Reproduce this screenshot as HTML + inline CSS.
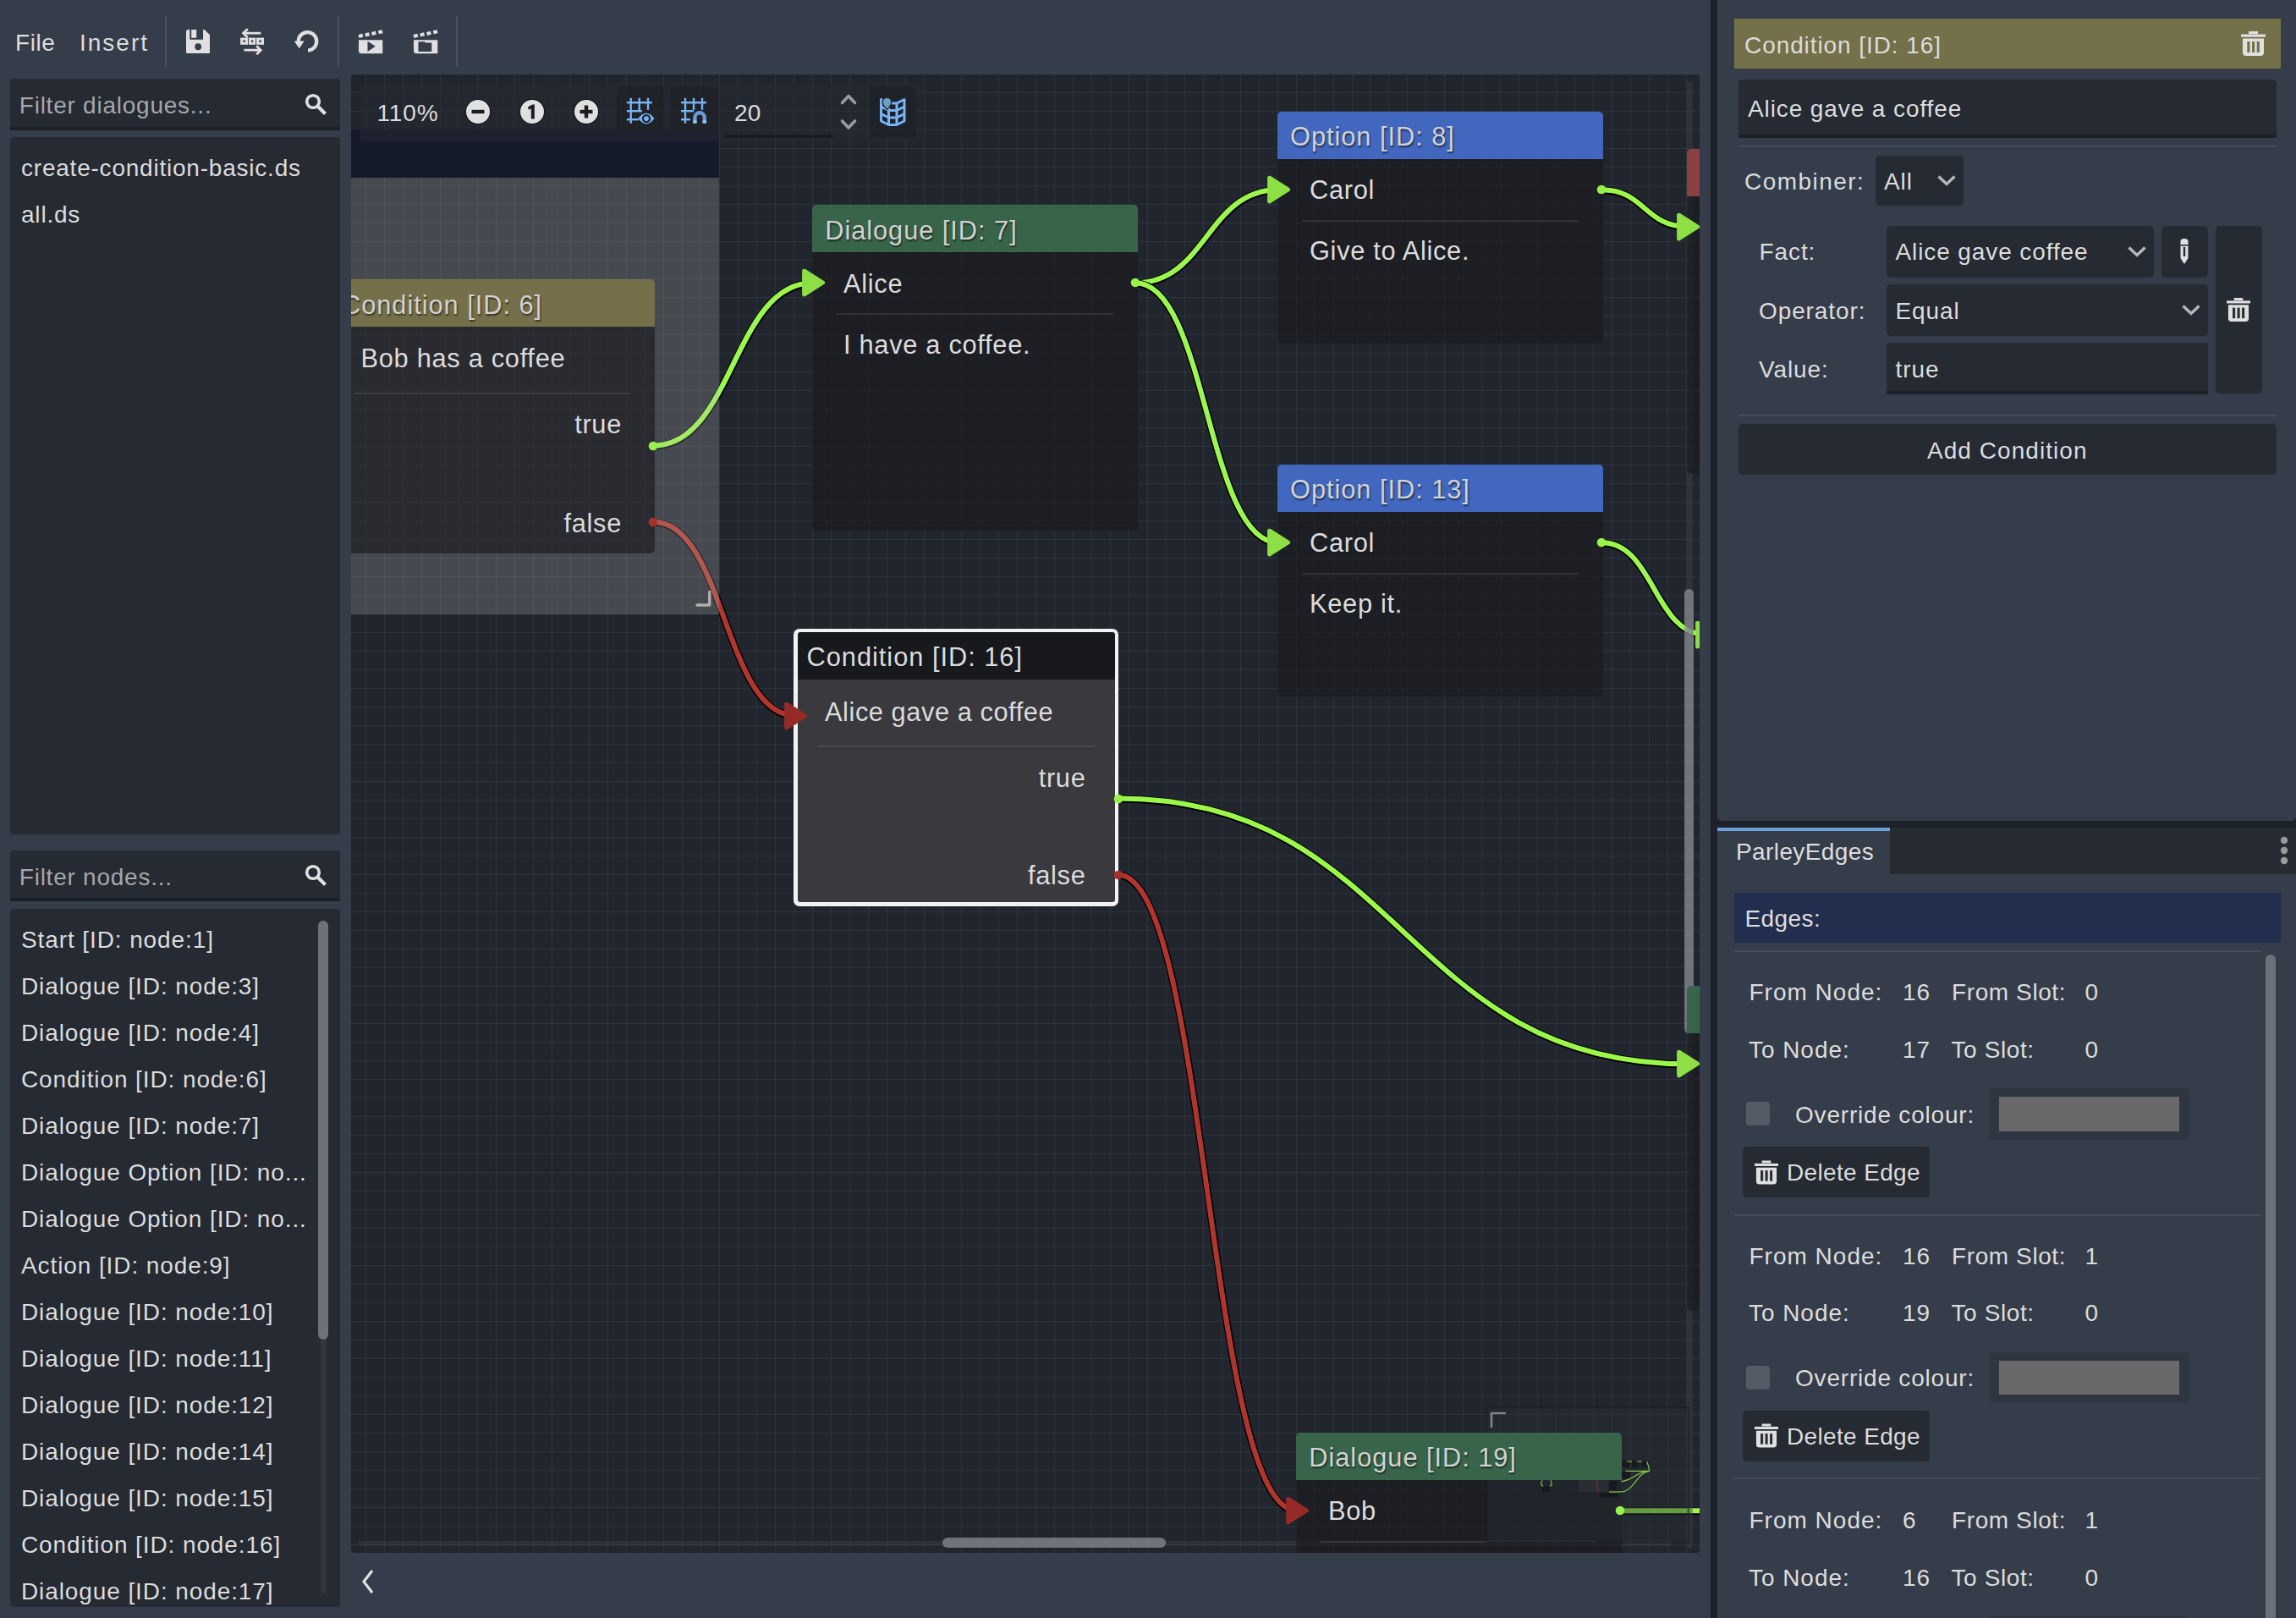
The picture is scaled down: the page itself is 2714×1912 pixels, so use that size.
<!DOCTYPE html><html><head><meta charset="utf-8"><style>
html,body{margin:0;padding:0;width:2714px;height:1912px;overflow:hidden;background:#363d4a;}
body{position:relative;font-family:"Liberation Sans",sans-serif;}
.t{position:absolute;line-height:1;white-space:pre;}
.r{position:absolute;}
</style></head><body>
<div class="t" style="left:18.0px;top:36.9px;font-size:28px;color:#dcdcdc;letter-spacing:0.55px;">File</div>
<div class="t" style="left:94.0px;top:36.9px;font-size:28px;color:#dcdcdc;letter-spacing:2.0px;">Insert</div>
<div class="r" style="left:195.0px;top:19.0px;width:2.0px;height:60.0px;background:#4a5161;"></div>
<div class="r" style="left:399.0px;top:19.0px;width:2.0px;height:60.0px;background:#4a5161;"></div>
<div class="r" style="left:539.0px;top:19.0px;width:2.0px;height:60.0px;background:#4a5161;"></div>
<svg class="r" style="left:219.8px;top:34.8px;" width="28.4" height="28.4" viewBox="0 0 16 16"><path fill="#e0e0e0" d="M1.5 0H12.2L16 3.8V14.5A1.5 1.5 0 0 1 14.5 16H1.5A1.5 1.5 0 0 1 0 14.5V1.5A1.5 1.5 0 0 1 1.5 0ZM2.4 0V6.6H11.3V0ZM3.5 0H6.9V5.5H3.5Z" fill-rule="evenodd"/><circle cx="8" cy="11.4" r="2.2" fill="#363d4a"/></svg>
<svg class="r" style="left:0;top:0" width="600" height="88">
<g fill="none" stroke="#e0e0e0" stroke-width="2.8">
<path d="M287.5 39.2H308.3"/><path d="M291.8 35.2L287.6 39.2L291.8 43.2" stroke-linecap="square"/>
<path d="M288.5 59.2H308"/><path d="M304.2 55.2L308.2 59.2L304.2 63.2" stroke-linecap="square"/>
<path d="M363.5 48.9m-10.75 0A10.75 10.75 0 1 1 364.05 59.6" stroke-width="4.3"/>
</g>
<g fill="#e0e0e0"><rect x="284.1" y="44.6" width="9" height="8.2"/><rect x="294" y="44.6" width="8.2" height="8.2"/><rect x="303.1" y="44.6" width="8.9" height="8.2"/>
<path d="M347.8 48.6H359.6L353.7 57.2Z"/></g>
<g fill="#363d4a"><rect x="287.4" y="47.5" width="2.4" height="2.4"/><rect x="296.9" y="47.5" width="2.4" height="2.4"/><rect x="306.3" y="47.5" width="2.4" height="2.4"/></g>
</svg>
<svg class="r" style="left:422.5px;top:36.0px;overflow:visible;" width="30" height="28" viewBox="0 0 30 28"><g fill="#e0e0e0">
<path d="M0.50 5.00L5.30 3.80L6.30 7.80L1.50 9.00Z"/><path d="M8.25 3.45L13.05 2.25L14.05 6.25L9.25 7.45Z"/><path d="M16.00 1.90L20.80 0.70L21.80 4.70L17.00 5.90Z"/><path d="M23.75 0.35L28.55 -0.85L29.55 3.15L24.75 4.35Z"/><path d="M1 11.2H29.3V27.2H4.5A3.5 3.5 0 0 1 1 23.7Z"/></g><path d="M11.5 12.8L20.8 18.8L11.5 24.9Z" fill="#363d4a"/></svg>
<svg class="r" style="left:487.5px;top:36.0px;overflow:visible;" width="30" height="28" viewBox="0 0 30 28"><g fill="#e0e0e0">
<path d="M0.50 5.00L5.30 3.80L6.30 7.80L1.50 9.00Z"/><path d="M8.25 3.45L13.05 2.25L14.05 6.25L9.25 7.45Z"/><path d="M16.00 1.90L20.80 0.70L21.80 4.70L17.00 5.90Z"/><path d="M23.75 0.35L28.55 -0.85L29.55 3.15L24.75 4.35Z"/><path d="M1 11.2H29.3V27.2H4.5A3.5 3.5 0 0 1 1 23.7Z"/></g><path d="M6.5 13.2H14.3V14.5H22.3V25H6.5Z" fill="#363d4a"/></svg>
<div class="r" style="left:12.0px;top:93.0px;width:390.0px;height:61.0px;background:#252a33;border-radius:4px 4px 0 0;"></div>
<div class="r" style="left:12.0px;top:150.0px;width:390.0px;height:4.0px;background:#1d2027;"></div>
<div class="t" style="left:22.8px;top:110.9px;font-size:28px;color:#a5a7ab;letter-spacing:0.76px;">Filter dialogues...</div>
<svg class="r" style="left:358.5px;top:108.5px;" width="30" height="30" viewBox="0 0 30 30"><circle cx="11" cy="11" r="7.3" fill="none" stroke="#e0e0e0" stroke-width="3.6"/><path d="M16 16L25.5 25.5" stroke="#e0e0e0" stroke-width="4.2" stroke-linecap="butt"/></svg>
<div class="r" style="left:12.0px;top:162.0px;width:390.0px;height:824.0px;background:#252a33;border-radius:4px;"></div>
<div class="t" style="left:25.0px;top:184.9px;font-size:28px;color:#dcdcdc;letter-spacing:0.78px;">create-condition-basic.ds</div>
<div class="t" style="left:25.0px;top:239.9px;font-size:28px;color:#dcdcdc;letter-spacing:0.8px;">all.ds</div>
<div class="r" style="left:12.0px;top:1005.0px;width:390.0px;height:60.0px;background:#252a33;border-radius:4px 4px 0 0;"></div>
<div class="r" style="left:12.0px;top:1061.0px;width:390.0px;height:4.0px;background:#1d2027;"></div>
<div class="t" style="left:22.8px;top:1022.6px;font-size:28px;color:#a5a7ab;letter-spacing:0.76px;">Filter nodes...</div>
<svg class="r" style="left:359.0px;top:1020.0px;" width="30" height="30" viewBox="0 0 30 30"><circle cx="11" cy="11" r="7.3" fill="none" stroke="#e0e0e0" stroke-width="3.6"/><path d="M16 16L25.5 25.5" stroke="#e0e0e0" stroke-width="4.2" stroke-linecap="butt"/></svg>
<div class="r" style="left:12.0px;top:1074.0px;width:390.0px;height:825.0px;background:#252a33;border-radius:4px;"></div>
<div class="t" style="left:25.0px;top:1096.6px;font-size:28px;color:#dcdcdc;letter-spacing:0.9px;">Start [ID: node:1]</div>
<div class="t" style="left:25.0px;top:1151.6px;font-size:28px;color:#dcdcdc;letter-spacing:0.9px;">Dialogue [ID: node:3]</div>
<div class="t" style="left:25.0px;top:1206.6px;font-size:28px;color:#dcdcdc;letter-spacing:0.9px;">Dialogue [ID: node:4]</div>
<div class="t" style="left:25.0px;top:1261.6px;font-size:28px;color:#dcdcdc;letter-spacing:0.9px;">Condition [ID: node:6]</div>
<div class="t" style="left:25.0px;top:1316.6px;font-size:28px;color:#dcdcdc;letter-spacing:0.9px;">Dialogue [ID: node:7]</div>
<div class="t" style="left:25.0px;top:1371.6px;font-size:28px;color:#dcdcdc;letter-spacing:0.9px;">Dialogue Option [ID: no...</div>
<div class="t" style="left:25.0px;top:1426.7px;font-size:28px;color:#dcdcdc;letter-spacing:0.9px;">Dialogue Option [ID: no...</div>
<div class="t" style="left:25.0px;top:1481.7px;font-size:28px;color:#dcdcdc;letter-spacing:0.9px;">Action [ID: node:9]</div>
<div class="t" style="left:25.0px;top:1536.7px;font-size:28px;color:#dcdcdc;letter-spacing:0.9px;">Dialogue [ID: node:10]</div>
<div class="t" style="left:25.0px;top:1591.7px;font-size:28px;color:#dcdcdc;letter-spacing:0.9px;">Dialogue [ID: node:11]</div>
<div class="t" style="left:25.0px;top:1646.7px;font-size:28px;color:#dcdcdc;letter-spacing:0.9px;">Dialogue [ID: node:12]</div>
<div class="t" style="left:25.0px;top:1701.7px;font-size:28px;color:#dcdcdc;letter-spacing:0.9px;">Dialogue [ID: node:14]</div>
<div class="t" style="left:25.0px;top:1756.7px;font-size:28px;color:#dcdcdc;letter-spacing:0.9px;">Dialogue [ID: node:15]</div>
<div class="t" style="left:25.0px;top:1811.7px;font-size:28px;color:#dcdcdc;letter-spacing:0.9px;">Condition [ID: node:16]</div>
<div class="t" style="left:25.0px;top:1866.7px;font-size:28px;color:#dcdcdc;letter-spacing:0.9px;">Dialogue [ID: node:17]</div>
<div class="r" style="left:378.6px;top:1088.0px;width:7.2px;height:795.0px;background:#30353f;border-radius:4px;"></div>
<div class="r" style="left:376.0px;top:1088.0px;width:11.7px;height:495.0px;background:#6d7178;border-radius:6px;"></div>
<div class="r" style="left:415px;top:88px;width:1594px;height:1747px;overflow:hidden;border-radius:4px;background:#21252d;">
<svg class="r" style="left:0;top:0" width="1594" height="1747"><g fill="rgba(255,255,255,0.062)"><rect x="17" y="0" width="1" height="1747"/><rect x="39" y="0" width="1" height="1747"/><rect x="61" y="0" width="1" height="1747"/><rect x="83" y="0" width="1" height="1747"/><rect x="105" y="0" width="1" height="1747"/><rect x="127" y="0" width="1" height="1747"/><rect x="149" y="0" width="1" height="1747"/><rect x="171" y="0" width="1" height="1747"/><rect x="193" y="0" width="1" height="1747"/><rect x="215" y="0" width="1" height="1747"/><rect x="237" y="0" width="1" height="1747"/><rect x="259" y="0" width="1" height="1747"/><rect x="281" y="0" width="1" height="1747"/><rect x="303" y="0" width="1" height="1747"/><rect x="325" y="0" width="1" height="1747"/><rect x="347" y="0" width="1" height="1747"/><rect x="369" y="0" width="1" height="1747"/><rect x="391" y="0" width="1" height="1747"/><rect x="413" y="0" width="1" height="1747"/><rect x="435" y="0" width="1" height="1747"/><rect x="457" y="0" width="1" height="1747"/><rect x="479" y="0" width="1" height="1747"/><rect x="501" y="0" width="1" height="1747"/><rect x="523" y="0" width="1" height="1747"/><rect x="545" y="0" width="1" height="1747"/><rect x="567" y="0" width="1" height="1747"/><rect x="589" y="0" width="1" height="1747"/><rect x="611" y="0" width="1" height="1747"/><rect x="633" y="0" width="1" height="1747"/><rect x="655" y="0" width="1" height="1747"/><rect x="677" y="0" width="1" height="1747"/><rect x="699" y="0" width="1" height="1747"/><rect x="721" y="0" width="1" height="1747"/><rect x="743" y="0" width="1" height="1747"/><rect x="765" y="0" width="1" height="1747"/><rect x="787" y="0" width="1" height="1747"/><rect x="809" y="0" width="1" height="1747"/><rect x="831" y="0" width="1" height="1747"/><rect x="853" y="0" width="1" height="1747"/><rect x="875" y="0" width="1" height="1747"/><rect x="897" y="0" width="1" height="1747"/><rect x="919" y="0" width="1" height="1747"/><rect x="941" y="0" width="1" height="1747"/><rect x="963" y="0" width="1" height="1747"/><rect x="985" y="0" width="1" height="1747"/><rect x="1007" y="0" width="1" height="1747"/><rect x="1029" y="0" width="1" height="1747"/><rect x="1051" y="0" width="1" height="1747"/><rect x="1073" y="0" width="1" height="1747"/><rect x="1095" y="0" width="1" height="1747"/><rect x="1117" y="0" width="1" height="1747"/><rect x="1139" y="0" width="1" height="1747"/><rect x="1161" y="0" width="1" height="1747"/><rect x="1183" y="0" width="1" height="1747"/><rect x="1204" y="0" width="1" height="1747"/><rect x="1226" y="0" width="1" height="1747"/><rect x="1248" y="0" width="1" height="1747"/><rect x="1270" y="0" width="1" height="1747"/><rect x="1292" y="0" width="1" height="1747"/><rect x="1314" y="0" width="1" height="1747"/><rect x="1336" y="0" width="1" height="1747"/><rect x="1358" y="0" width="1" height="1747"/><rect x="1380" y="0" width="1" height="1747"/><rect x="1402" y="0" width="1" height="1747"/><rect x="1424" y="0" width="1" height="1747"/><rect x="1446" y="0" width="1" height="1747"/><rect x="1468" y="0" width="1" height="1747"/><rect x="1490" y="0" width="1" height="1747"/><rect x="1512" y="0" width="1" height="1747"/><rect x="1534" y="0" width="1" height="1747"/><rect x="1556" y="0" width="1" height="1747"/><rect x="1578" y="0" width="1" height="1747"/><rect x="0" y="21" width="1594" height="1"/><rect x="0" y="43" width="1594" height="1"/><rect x="0" y="65" width="1594" height="1"/><rect x="0" y="87" width="1594" height="1"/><rect x="0" y="109" width="1594" height="1"/><rect x="0" y="131" width="1594" height="1"/><rect x="0" y="153" width="1594" height="1"/><rect x="0" y="175" width="1594" height="1"/><rect x="0" y="197" width="1594" height="1"/><rect x="0" y="219" width="1594" height="1"/><rect x="0" y="241" width="1594" height="1"/><rect x="0" y="263" width="1594" height="1"/><rect x="0" y="285" width="1594" height="1"/><rect x="0" y="307" width="1594" height="1"/><rect x="0" y="329" width="1594" height="1"/><rect x="0" y="351" width="1594" height="1"/><rect x="0" y="373" width="1594" height="1"/><rect x="0" y="395" width="1594" height="1"/><rect x="0" y="417" width="1594" height="1"/><rect x="0" y="439" width="1594" height="1"/><rect x="0" y="461" width="1594" height="1"/><rect x="0" y="483" width="1594" height="1"/><rect x="0" y="505" width="1594" height="1"/><rect x="0" y="527" width="1594" height="1"/><rect x="0" y="549" width="1594" height="1"/><rect x="0" y="571" width="1594" height="1"/><rect x="0" y="593" width="1594" height="1"/><rect x="0" y="615" width="1594" height="1"/><rect x="0" y="637" width="1594" height="1"/><rect x="0" y="659" width="1594" height="1"/><rect x="0" y="681" width="1594" height="1"/><rect x="0" y="703" width="1594" height="1"/><rect x="0" y="725" width="1594" height="1"/><rect x="0" y="747" width="1594" height="1"/><rect x="0" y="769" width="1594" height="1"/><rect x="0" y="791" width="1594" height="1"/><rect x="0" y="813" width="1594" height="1"/><rect x="0" y="835" width="1594" height="1"/><rect x="0" y="857" width="1594" height="1"/><rect x="0" y="879" width="1594" height="1"/><rect x="0" y="901" width="1594" height="1"/><rect x="0" y="923" width="1594" height="1"/><rect x="0" y="945" width="1594" height="1"/><rect x="0" y="967" width="1594" height="1"/><rect x="0" y="989" width="1594" height="1"/><rect x="0" y="1011" width="1594" height="1"/><rect x="0" y="1033" width="1594" height="1"/><rect x="0" y="1055" width="1594" height="1"/><rect x="0" y="1077" width="1594" height="1"/><rect x="0" y="1099" width="1594" height="1"/><rect x="0" y="1121" width="1594" height="1"/><rect x="0" y="1143" width="1594" height="1"/><rect x="0" y="1165" width="1594" height="1"/><rect x="0" y="1187" width="1594" height="1"/><rect x="0" y="1209" width="1594" height="1"/><rect x="0" y="1231" width="1594" height="1"/><rect x="0" y="1253" width="1594" height="1"/><rect x="0" y="1275" width="1594" height="1"/><rect x="0" y="1297" width="1594" height="1"/><rect x="0" y="1319" width="1594" height="1"/><rect x="0" y="1341" width="1594" height="1"/><rect x="0" y="1363" width="1594" height="1"/><rect x="0" y="1385" width="1594" height="1"/><rect x="0" y="1407" width="1594" height="1"/><rect x="0" y="1429" width="1594" height="1"/><rect x="0" y="1451" width="1594" height="1"/><rect x="0" y="1473" width="1594" height="1"/><rect x="0" y="1495" width="1594" height="1"/><rect x="0" y="1517" width="1594" height="1"/><rect x="0" y="1539" width="1594" height="1"/><rect x="0" y="1561" width="1594" height="1"/><rect x="0" y="1583" width="1594" height="1"/><rect x="0" y="1605" width="1594" height="1"/><rect x="0" y="1627" width="1594" height="1"/><rect x="0" y="1649" width="1594" height="1"/><rect x="0" y="1671" width="1594" height="1"/><rect x="0" y="1693" width="1594" height="1"/><rect x="0" y="1715" width="1594" height="1"/><rect x="0" y="1737" width="1594" height="1"/></g></svg>
<svg class="r" style="left:0;top:0;" width="1594" height="1747"><path d="M357.4 438.5C451.7 438.5 451.7 246.2 546.0 246.2" fill="none" stroke="#000" stroke-opacity="1.0" stroke-width="8.8" transform="translate(0.3,0.6)"/><path d="M357.4 438.5C451.7 438.5 451.7 246.2 546.0 246.2" fill="none" stroke="#9cf74b" stroke-opacity="1.0" stroke-width="6"/><path d="M357.4 528.7C441.2 528.7 441.2 757.7 525.0 757.7" fill="none" stroke="#000" stroke-opacity="1.0" stroke-width="8.8" transform="translate(0.3,0.6)"/><path d="M357.4 528.7C441.2 528.7 441.2 757.7 525.0 757.7" fill="none" stroke="#b0352e" stroke-opacity="1.0" stroke-width="6"/><path d="M927.0 246.2C1011.5 246.2 1011.5 136.3 1096.0 136.3" fill="none" stroke="#000" stroke-opacity="1.0" stroke-width="8.8" transform="translate(0.3,0.6)"/><path d="M927.0 246.2C1011.5 246.2 1011.5 136.3 1096.0 136.3" fill="none" stroke="#9cf74b" stroke-opacity="1.0" stroke-width="6"/><path d="M927.0 246.2C1011.5 246.2 1011.5 553.3 1096.0 553.3" fill="none" stroke="#000" stroke-opacity="1.0" stroke-width="8.8" transform="translate(0.3,0.6)"/><path d="M927.0 246.2C1011.5 246.2 1011.5 553.3 1096.0 553.3" fill="none" stroke="#9cf74b" stroke-opacity="1.0" stroke-width="6"/><path d="M1478.4 136.3C1529.2 136.3 1529.2 180.0 1580.0 180.0" fill="none" stroke="#000" stroke-opacity="1.0" stroke-width="8.8" transform="translate(0.3,0.6)"/><path d="M1478.4 136.3C1529.2 136.3 1529.2 180.0 1580.0 180.0" fill="none" stroke="#9cf74b" stroke-opacity="1.0" stroke-width="6"/><path d="M1478.4 553.3C1540.2 553.3 1540.2 662.0 1602.0 662.0" fill="none" stroke="#000" stroke-opacity="1.0" stroke-width="8.8" transform="translate(0.3,0.6)"/><path d="M1478.4 553.3C1540.2 553.3 1540.2 662.0 1602.0 662.0" fill="none" stroke="#9cf74b" stroke-opacity="1.0" stroke-width="6"/><path d="M906.6 855.6C1243.3 855.6 1243.3 1169.3 1580.0 1169.3" fill="none" stroke="#000" stroke-opacity="1.0" stroke-width="8.8" transform="translate(0.3,0.6)"/><path d="M906.6 855.6C1243.3 855.6 1243.3 1169.3 1580.0 1169.3" fill="none" stroke="#9cf74b" stroke-opacity="1.0" stroke-width="6"/><path d="M906.6 945.8C1012.3 945.8 1012.3 1697.2 1118.0 1697.2" fill="none" stroke="#000" stroke-opacity="1.0" stroke-width="8.8" transform="translate(0.3,0.6)"/><path d="M906.6 945.8C1012.3 945.8 1012.3 1697.2 1118.0 1697.2" fill="none" stroke="#b0352e" stroke-opacity="1.0" stroke-width="6"/><path d="M1500.4 1697.2C1592.7 1697.2 1592.7 1697.2 1685.0 1697.2" fill="none" stroke="#000" stroke-opacity="1.0" stroke-width="8.8" transform="translate(0.3,0.6)"/><path d="M1500.4 1697.2C1592.7 1697.2 1592.7 1697.2 1685.0 1697.2" fill="none" stroke="#9cf74b" stroke-opacity="1.0" stroke-width="6"/></svg>
<div class="r" style="left:1578.5px;top:7.8px;width:7.0px;height:1734.2px;background:rgba(60,64,72,0.45);border-radius:3px;"></div>
<div class="r" style="left:1576.0px;top:608.2px;width:11.3px;height:524.8px;background:rgba(140,143,150,0.72);border-radius:6px;"></div>
<div class="r" style="left:8.0px;top:1732.5px;width:1553.0px;height:6.0px;background:rgba(60,64,72,0.45);border-radius:3px;"></div>
<div class="r" style="left:699.0px;top:1729.0px;width:263.6px;height:11.8px;background:rgba(140,143,150,0.72);border-radius:6px;"></div>
<div class="r" style="left:-115.0px;top:65.3px;width:550.4px;height:56.7px;background:#161b2b;"></div>
<div class="r" style="left:-115.0px;top:122.0px;width:550.4px;height:515.5px;background:rgba(185,186,188,0.25);"></div>
<svg class="r" style="left:405px;top:608px" width="24" height="24"><path d="M18.7 3.5V19H4" fill="none" stroke="#b0b0ab" stroke-width="3.4" stroke-linecap="round" stroke-linejoin="round"/></svg>
<div class="r" style="left:-26.0px;top:242.0px;width:385.0px;height:56.2px;background:#757049;border-radius:5px 5px 0 0;"></div>
<div class="r" style="left:-26.0px;top:298.2px;width:385.0px;height:267.6px;background:rgba(26,26,29,0.64);border-radius:0 0 5px 5px;"></div>
<div class="t" style="left:-11.0px;top:257.7px;font-size:30.8px;color:#d2d2d2;letter-spacing:0.95px;text-shadow:1px 2px 2px rgba(0,0,0,0.55);">Condition [ID: 6]</div>
<div class="t" style="left:11.5px;top:320.5px;font-size:30.8px;color:#dcdcdc;letter-spacing:0.7px;">Bob has a coffee</div>
<div class="r" style="left:3.0px;top:375.5px;width:327.0px;height:2.0px;background:rgba(255,255,255,0.09);"></div>
<div class="t" style="left:-80.0px;width:400px;text-align:right;top:398.5px;font-size:30.8px;color:#dcdcdc;letter-spacing:0.7px;">true</div>
<div class="t" style="left:-80.0px;width:400px;text-align:right;top:515.5px;font-size:30.8px;color:#dcdcdc;letter-spacing:0.7px;">false</div>
<svg class="r" style="left:350.4px;top:431.5px" width="14" height="14"><circle cx="7" cy="7" r="5.3" fill="#98f24a"/></svg>
<svg class="r" style="left:350.4px;top:521.7px" width="14" height="14"><circle cx="7" cy="7" r="5.3" fill="#a8302a"/></svg>
<div class="r" style="left:545.2px;top:154.3px;width:385.0px;height:55.7px;background:#386549;border-radius:5px 5px 0 0;"></div>
<div class="r" style="left:545.2px;top:210.0px;width:385.0px;height:328.6px;background:rgba(26,26,29,0.64);border-radius:0 0 5px 5px;"></div>
<div class="t" style="left:560.2px;top:169.5px;font-size:30.8px;color:#d2d2d2;letter-spacing:0.95px;text-shadow:1px 2px 2px rgba(0,0,0,0.55);">Dialogue [ID: 7]</div>
<div class="t" style="left:582.0px;top:233.0px;font-size:30.8px;color:#dcdcdc;letter-spacing:0.7px;">Alice</div>
<div class="r" style="left:574.0px;top:281.5px;width:326.6px;height:2.0px;background:rgba(255,255,255,0.09);"></div>
<div class="t" style="left:582.0px;top:304.5px;font-size:30.8px;color:#dcdcdc;letter-spacing:0.7px;">I have a coffee.</div>
<svg class="r" style="left:532.5px;top:229.2px" width="30" height="34"><path d="M2.6 3.2L24.6 17L2.6 30.8Z" fill="#8ddf45" stroke="#8ddf45" stroke-width="5" stroke-linejoin="round"/></svg>
<svg class="r" style="left:920.0px;top:239.2px" width="14" height="14"><circle cx="7" cy="7" r="5.3" fill="#98f24a"/></svg>
<div class="r" style="left:1095.0px;top:44.0px;width:385.0px;height:55.7px;background:#4167be;border-radius:5px 5px 0 0;"></div>
<div class="r" style="left:1095.0px;top:99.7px;width:385.0px;height:218.0px;background:rgba(26,26,29,0.64);border-radius:0 0 5px 5px;"></div>
<div class="t" style="left:1110.0px;top:59.2px;font-size:30.8px;color:#d2d2d2;letter-spacing:0.95px;text-shadow:1px 2px 2px rgba(0,0,0,0.55);">Option [ID: 8]</div>
<div class="t" style="left:1133.0px;top:122.1px;font-size:30.8px;color:#dcdcdc;letter-spacing:0.7px;">Carol</div>
<div class="r" style="left:1124.0px;top:171.6px;width:326.7px;height:2.0px;background:rgba(255,255,255,0.09);"></div>
<div class="t" style="left:1133.0px;top:194.1px;font-size:30.8px;color:#dcdcdc;letter-spacing:0.67px;">Give to Alice.</div>
<svg class="r" style="left:1082.5px;top:119.3px" width="30" height="34"><path d="M2.6 3.2L24.6 17L2.6 30.8Z" fill="#8ddf45" stroke="#8ddf45" stroke-width="5" stroke-linejoin="round"/></svg>
<svg class="r" style="left:1471.4px;top:129.3px" width="14" height="14"><circle cx="7" cy="7" r="5.3" fill="#98f24a"/></svg>
<div class="r" style="left:1095.0px;top:461.3px;width:385.0px;height:55.5px;background:#4167be;border-radius:5px 5px 0 0;"></div>
<div class="r" style="left:1095.0px;top:516.8px;width:385.0px;height:218.6px;background:rgba(26,26,29,0.64);border-radius:0 0 5px 5px;"></div>
<div class="t" style="left:1110.0px;top:476.3px;font-size:30.8px;color:#d2d2d2;letter-spacing:0.95px;text-shadow:1px 2px 2px rgba(0,0,0,0.55);">Option [ID: 13]</div>
<div class="t" style="left:1133.0px;top:539.1px;font-size:30.8px;color:#dcdcdc;letter-spacing:0.7px;">Carol</div>
<div class="r" style="left:1124.0px;top:589.0px;width:326.7px;height:2.0px;background:rgba(255,255,255,0.09);"></div>
<div class="t" style="left:1133.0px;top:610.8px;font-size:30.8px;color:#dcdcdc;letter-spacing:0.7px;">Keep it.</div>
<svg class="r" style="left:1082.5px;top:536.3px" width="30" height="34"><path d="M2.6 3.2L24.6 17L2.6 30.8Z" fill="#8ddf45" stroke="#8ddf45" stroke-width="5" stroke-linejoin="round"/></svg>
<svg class="r" style="left:1471.4px;top:546.3px" width="14" height="14"><circle cx="7" cy="7" r="5.3" fill="#98f24a"/></svg>
<div class="r" style="left:1579.0px;top:88.3px;width:406.0px;height:55.7px;background:#8a4143;border-radius:5px 5px 0 0;"></div>
<div class="r" style="left:1579.0px;top:144.0px;width:406.0px;height:327.6px;background:rgba(26,26,29,0.64);border-radius:0 0 5px 5px;"></div>
<svg class="r" style="left:1566.5px;top:163.0px" width="30" height="34"><path d="M2.6 3.2L24.6 17L2.6 30.8Z" fill="#8ddf45" stroke="#8ddf45" stroke-width="5" stroke-linejoin="round"/></svg>
<div class="r" style="left:1579.0px;top:1077.0px;width:406.0px;height:56.0px;background:#386549;border-radius:5px 5px 0 0;"></div>
<div class="r" style="left:1579.0px;top:1133.0px;width:406.0px;height:328.3px;background:rgba(26,26,29,0.64);border-radius:0 0 5px 5px;"></div>
<svg class="r" style="left:1566.5px;top:1152.0px" width="30" height="34"><path d="M2.6 3.2L24.6 17L2.6 30.8Z" fill="#8ddf45" stroke="#8ddf45" stroke-width="5" stroke-linejoin="round"/></svg>
<svg class="r" style="left:1588.5px;top:645.0px" width="30" height="34"><path d="M2.6 3.2L24.6 17L2.6 30.8Z" fill="#8ddf45" stroke="#8ddf45" stroke-width="5" stroke-linejoin="round"/></svg>
<div class="r" style="left:523.3px;top:654.5px;width:384.1px;height:328.4px;background:#f2f2f2;border-radius:7px;"></div>
<div class="r" style="left:527.8px;top:659.0px;width:375.1px;height:56.4px;background:#18191d;border-radius:3px 3px 0 0;"></div>
<div class="r" style="left:527.8px;top:715.4px;width:375.1px;height:263.0px;background:#39393e;border-radius:0 0 3px 3px;"></div>
<div class="t" style="left:538.5px;top:673.5px;font-size:30.8px;color:#dcdcdc;letter-spacing:0.97px;">Condition [ID: 16]</div>
<div class="t" style="left:560.0px;top:738.5px;font-size:30.8px;color:#dcdcdc;letter-spacing:0.55px;">Alice gave a coffee</div>
<div class="r" style="left:552.0px;top:792.7px;width:327.0px;height:2.0px;background:rgba(255,255,255,0.09);"></div>
<div class="t" style="left:468.5px;width:400px;text-align:right;top:816.5px;font-size:30.8px;color:#dcdcdc;letter-spacing:0.7px;">true</div>
<div class="t" style="left:468.5px;width:400px;text-align:right;top:932.2px;font-size:30.8px;color:#dcdcdc;letter-spacing:0.7px;">false</div>
<svg class="r" style="left:511.5px;top:740.9px" width="30" height="34"><path d="M2.6 3.2L24.6 17L2.6 30.8Z" fill="#952b27" stroke="#952b27" stroke-width="5" stroke-linejoin="round"/></svg>
<svg class="r" style="left:899.6px;top:848.6px" width="14" height="14"><circle cx="7" cy="7" r="5.3" fill="#98f24a"/></svg>
<svg class="r" style="left:899.6px;top:938.8px" width="14" height="14"><circle cx="7" cy="7" r="5.3" fill="#a8302a"/></svg>
<div class="r" style="left:1117.3px;top:1661.0px;width:385.0px;height:151.0px;background:rgba(26,26,29,0.64);"></div>
<div class="t" style="left:1155.0px;top:1682.7px;font-size:30.8px;color:#dcdcdc;letter-spacing:0.7px;">Bob</div>
<div class="r" style="left:1146.0px;top:1733.0px;width:327.0px;height:2.0px;background:rgba(255,255,255,0.09);"></div>
<div class="r" style="left:1342.3px;top:1575.0px;width:239.6px;height:159.5px;background:rgba(40,44,52,0.45);border:1px solid rgba(18,20,24,0.55);box-sizing:border-box;"></div>
<svg class="r" style="left:1342.3px;top:1575px" width="240" height="160"><g fill="rgba(12,12,15,0.5)"><rect x="160" y="63" width="9" height="8"/><rect x="172" y="63" width="8" height="8"/><rect x="183" y="63" width="9" height="8"/><rect x="160" y="76" width="10" height="8"/><rect x="145.6" y="87" width="8" height="10.5"/><rect x="133.7" y="101.7" width="22" height="4.7"/><rect x="66" y="93" width="9" height="7"/></g><rect x="108" y="84" width="37" height="16.8" fill="rgba(60,62,68,0.35)" stroke="rgba(20,20,24,0.6)" stroke-width="1"/><g fill="none" stroke="#86c944" stroke-width="1.2"><path d="M164.4 75.4H192.7"/><path d="M192.7 75.4C178 75.4 172 87.5 159 87.5"/><path d="M192.7 75.4C178 77 174 99.9 159 99.9"/><path d="M189.7 64Q192 70 192.7 75.4"/><path d="M166 64H172M178 64H184"/><path d="M66 86.4Q63 91 67 93.4"/><path d="M76 86.4Q79 91 75 93.4"/><path d="M145 100H159"/></g><path d="M131 86Q129 94 133 100" fill="none" stroke="#8a3028" stroke-width="1"/><path d="M6 23V7H22" fill="none" stroke="#858585" stroke-width="2.6" stroke-linecap="round"/></svg>
<div class="r" style="left:1117.3px;top:1605.3px;width:385.0px;height:55.7px;background:#386549;border-radius:5px 5px 0 0;"></div>
<div class="t" style="left:1132.3px;top:1619.5px;font-size:30.8px;color:#d2d2d2;letter-spacing:0.95px;text-shadow:1px 2px 2px rgba(0,0,0,0.55);">Dialogue [ID: 19]</div>
<svg class="r" style="left:1104.5px;top:1680.2px" width="30" height="34"><path d="M2.6 3.2L24.6 17L2.6 30.8Z" fill="#952b27" stroke="#952b27" stroke-width="5" stroke-linejoin="round"/></svg>
<svg class="r" style="left:1493.4px;top:1690.2px" width="14" height="14"><circle cx="7" cy="7" r="5.3" fill="#98f24a"/></svg>
<div class="r" style="left:10.0px;top:10.0px;width:665.0px;height:68.8px;background:rgba(38,42,50,0.5);border-radius:6px;"></div>
<div class="t" style="left:30.5px;top:31.9px;font-size:28px;color:#dcdcdc;letter-spacing:0.85px;">110%</div>
<svg class="r" style="left:133.8px;top:28.0px" width="32" height="32"><circle cx="16" cy="16" r="14.6" fill="#e0e0e0" stroke="#15171b" stroke-width="1.2"/><rect x="8.5" y="13.8" width="15" height="4.4" fill="#1b1d22"/></svg>
<svg class="r" style="left:197.9px;top:28.0px" width="32" height="32"><circle cx="16" cy="16" r="14.6" fill="#e0e0e0" stroke="#15171b" stroke-width="1.2"/><path d="M11 10.5L16.5 7.5H18.8V24.5H14.8V12.3L11.8 13.8Z" fill="#1b1d22"/></svg>
<svg class="r" style="left:261.8px;top:28.0px" width="32" height="32"><circle cx="16" cy="16" r="14.6" fill="#e0e0e0" stroke="#15171b" stroke-width="1.2"/><rect x="8.5" y="13.8" width="15" height="4.4" fill="#1b1d22"/><rect x="13.8" y="8.5" width="4.4" height="15" fill="#1b1d22"/></svg>
<div class="r" style="left:314.0px;top:13.5px;width:55.5px;height:52.1px;background:rgba(30,33,40,0.65);border-radius:5px 5px 0 0;"></div>
<div class="r" style="left:377.8px;top:13.5px;width:56.0px;height:52.1px;background:rgba(30,33,40,0.65);border-radius:5px 5px 0 0;"></div>
<svg class="r" style="left:324px;top:26px" width="40" height="38"><g fill="#77b4f5">
<rect x="5.5" y="1.8" width="2.4" height="30"/><rect x="15.5" y="1.8" width="2.4" height="16"/><rect x="25.8" y="1.8" width="2.4" height="14"/>
<rect x="1.9" y="6" width="30" height="2.4"/><rect x="1.9" y="16" width="18" height="2.4"/><rect x="1.9" y="26" width="14" height="2.4"/>
<path d="M15.4 26.1Q25 13.5 34.5 26.1Q25 38.7 15.4 26.1Z"/></g><circle cx="25" cy="26.1" r="5.2" fill="#22262e"/><circle cx="25" cy="26.1" r="2.9" fill="#77b4f5"/></svg>
<svg class="r" style="left:388px;top:26px" width="40" height="38"><g fill="#77b4f5">
<rect x="5.8" y="1.8" width="2.4" height="30"/><rect x="15.8" y="1.8" width="2.4" height="14"/><rect x="25.8" y="1.8" width="2.4" height="14"/>
<rect x="2" y="6" width="30" height="2.4"/><rect x="2" y="16" width="15" height="2.4"/><rect x="2" y="26" width="11" height="2.4"/></g>
<path d="M16.2 31.7V25A7.9 7.9 0 0 1 32 25V31.7H27.6V25A3.5 3.5 0 0 0 20.6 25V31.7Z" fill="#6e9cd6"/><rect x="16.2" y="28.2" width="4.4" height="3.5" fill="#8cc4ff"/><rect x="27.6" y="28.2" width="4.4" height="3.5" fill="#8cc4ff"/></svg>
<div class="t" style="left:453.0px;top:32.1px;font-size:28px;color:#dcdcdc;letter-spacing:0.3px;">20</div>
<div class="r" style="left:442.0px;top:71.0px;width:128.0px;height:4.0px;background:rgba(22,24,30,0.7);"></div>
<svg class="r" style="left:576px;top:20px" width="24" height="48"><path d="M4.5 13.5L12 5.5L19.5 13.5" fill="none" stroke="#9a9a9a" stroke-width="3.6" stroke-linecap="round" stroke-linejoin="round"/><path d="M4.5 35L12 43L19.5 35" fill="none" stroke="#9a9a9a" stroke-width="3.6" stroke-linecap="round" stroke-linejoin="round"/></svg>
<div class="r" style="left:612.0px;top:13.5px;width:56.3px;height:61.3px;background:rgba(30,33,40,0.65);border-radius:5px;"></div>
<svg class="r" style="left:621px;top:24px" width="38" height="40"><g fill="none" stroke="#77b4f5" stroke-width="3" stroke-linejoin="round"><path d="M5.5 5.5V31L14.5 35.5L24 35.5L33 31V5.5L24 10H14.5Z"/><path d="M5.5 14L14.5 18.5H24L33 14M5.5 22.5L14.5 27H24L33 22.5M14.5 10V35.5M24 10V35.5"/></g><path d="M12.5 9.8A5.2 5.2 0 1 1 12.5 9.9Z" fill="none"/><path d="M7.2 8.5A5.3 5.3 0 0 1 17.8 8.5Q17.8 12.5 12.5 17.5Q7.2 12.5 7.2 8.5Z" fill="#6d9ec4" stroke="#23272f" stroke-width="1.4"/></svg>
</div>
<svg class="r" style="left:426.0px;top:1853.0px;" width="18" height="32" viewBox="0 0 18 32"><path d="M14 3L4 16L14 29" fill="none" stroke="#e0e0e0" stroke-width="3.2"/></svg>
<div class="r" style="left:2022.0px;top:0.0px;width:8.0px;height:1912.0px;background:#1e2129;"></div>
<div class="r" style="left:2030.0px;top:955.0px;width:684.0px;height:23.2px;background:#1e2129;"></div>
<div class="r" style="left:2030.0px;top:940.0px;width:684.0px;height:29.7px;background:#363d4a;border-radius:0 0 5px 5px;"></div>
<div class="r" style="left:2050.0px;top:22.0px;width:646.0px;height:58.7px;background:#747049;"></div>
<div class="t" style="left:2062.0px;top:39.5px;font-size:28px;color:#dcdcdc;letter-spacing:0.92px;">Condition [ID: 16]</div>
<svg class="r" style="left:2648.8px;top:36.9px;" width="29" height="29" viewBox="0 0 29 29"><g fill="#e0e0e0"><rect x="0" y="3.5" width="29" height="3.2"/><rect x="9" y="0" width="11" height="3"/><path d="M2 8.5H27V25A4 4 0 0 1 23 29H6A4 4 0 0 1 2 25Z"/></g><g fill="#747049"><rect x="7.3" y="12" width="3.2" height="13"/><rect x="13" y="12" width="3.2" height="13"/><rect x="18.7" y="12" width="3.2" height="13"/></g></svg>
<div class="r" style="left:2055.0px;top:94.3px;width:636.0px;height:68.3px;background:#252a33;border-radius:4px 4px 0 0;"></div>
<div class="r" style="left:2055.0px;top:158.6px;width:636.0px;height:4.0px;background:#1d2027;"></div>
<div class="t" style="left:2066.0px;top:115.4px;font-size:28px;color:#dcdcdc;letter-spacing:0.9px;">Alice gave a coffee</div>
<div class="r" style="left:2055.0px;top:172.2px;width:636.0px;height:2.0px;background:#454c59;"></div>
<div class="t" style="left:2062.0px;top:201.2px;font-size:28px;color:#dcdcdc;letter-spacing:1.45px;">Combiner:</div>
<div class="r" style="left:2216.5px;top:183.5px;width:104.3px;height:59.9px;background:#252a33;border-radius:5px;"></div>
<div class="t" style="left:2227.0px;top:201.2px;font-size:28px;color:#dcdcdc;letter-spacing:0.9px;">All</div>
<svg class="r" style="left:2289.0px;top:205.0px;" width="24" height="16" viewBox="0 0 24 16"><path d="M2.5 3.5L12 12.5L21.5 3.5" fill="none" stroke="#b8b8b8" stroke-width="3.4"/></svg>
<div class="t" style="left:2079.5px;top:284.3px;font-size:28px;color:#dcdcdc;letter-spacing:0.9px;">Fact:</div>
<div class="r" style="left:2230.0px;top:267.2px;width:316.0px;height:60.5px;background:#252a33;border-radius:5px;"></div>
<div class="t" style="left:2240.5px;top:284.3px;font-size:28px;color:#dcdcdc;letter-spacing:0.9px;">Alice gave coffee</div>
<svg class="r" style="left:2513.7px;top:288.9px;" width="24" height="16" viewBox="0 0 24 16"><path d="M2.5 3.5L12 12.5L21.5 3.5" fill="none" stroke="#b8b8b8" stroke-width="3.4"/></svg>
<div class="r" style="left:2554.5px;top:267.2px;width:55.0px;height:60.5px;background:#252a33;border-radius:5px;"></div>
<svg class="r" style="left:2574.0px;top:281.0px;" width="16" height="32" viewBox="0 0 16 32"><path d="M3.5 4A4.5 3 0 0 1 12.5 4V24L8 31L3.5 24Z" fill="#e0e0e0"/><rect x="6.8" y="11" width="2.4" height="11" fill="#252a33"/><rect x="3.5" y="8" width="9" height="1.6" fill="#252a33"/></svg>
<div class="r" style="left:2618.6px;top:267.2px;width:55.4px;height:198.3px;background:#252a33;border-radius:5px;"></div>
<svg class="r" style="left:2632.0px;top:352.0px;" width="28" height="28" viewBox="0 0 29 29"><g fill="#e0e0e0"><rect x="0" y="3.5" width="29" height="3.2"/><rect x="9" y="0" width="11" height="3"/><path d="M2 8.5H27V25A4 4 0 0 1 23 29H6A4 4 0 0 1 2 25Z"/></g><g fill="#2a2e36"><rect x="7.3" y="12" width="3.2" height="13"/><rect x="13" y="12" width="3.2" height="13"/><rect x="18.7" y="12" width="3.2" height="13"/></g></svg>
<div class="t" style="left:2079.0px;top:353.9px;font-size:28px;color:#dcdcdc;letter-spacing:0.9px;">Operator:</div>
<div class="r" style="left:2230.0px;top:336.2px;width:379.5px;height:60.4px;background:#252a33;border-radius:5px;"></div>
<div class="t" style="left:2240.5px;top:353.9px;font-size:28px;color:#dcdcdc;letter-spacing:0.9px;">Equal</div>
<svg class="r" style="left:2577.8px;top:358.4px;" width="24" height="16" viewBox="0 0 24 16"><path d="M2.5 3.5L12 12.5L21.5 3.5" fill="none" stroke="#b8b8b8" stroke-width="3.4"/></svg>
<div class="t" style="left:2079.0px;top:422.8px;font-size:28px;color:#dcdcdc;letter-spacing:0.9px;">Value:</div>
<div class="r" style="left:2230.0px;top:405.0px;width:379.5px;height:60.5px;background:#252a33;border-radius:4px 4px 0 0;"></div>
<div class="r" style="left:2230.0px;top:461.5px;width:379.5px;height:4.0px;background:#1d2027;"></div>
<div class="t" style="left:2240.5px;top:422.8px;font-size:28px;color:#dcdcdc;letter-spacing:0.9px;">true</div>
<div class="r" style="left:2055.0px;top:490.0px;width:636.0px;height:2.0px;background:#454c59;"></div>
<div class="r" style="left:2055.0px;top:501.0px;width:636.0px;height:60.4px;background:#252a33;border-radius:5px;"></div>
<div class="t" style="left:2278.0px;top:518.6px;font-size:28px;color:#dcdcdc;letter-spacing:1.05px;">Add Condition</div>
<div class="r" style="left:2030.0px;top:978.2px;width:684.0px;height:54.6px;background:#262b34;"></div>
<div class="r" style="left:2030.0px;top:978.2px;width:204.0px;height:54.6px;background:#363d4a;"></div>
<div class="r" style="left:2030.0px;top:978.2px;width:204.0px;height:3.8px;background:#6e9fd9;"></div>
<div class="t" style="left:2052.0px;top:993.1px;font-size:28px;color:#dcdcdc;letter-spacing:0.4px;">ParleyEdges</div>
<svg class="r" style="left:2694.0px;top:988.0px;" width="12" height="10" viewBox="0 0 12 10"><circle cx="6" cy="5" r="4.2" fill="#9a9a9a"/></svg>
<svg class="r" style="left:2694.0px;top:1000.0px;" width="12" height="10" viewBox="0 0 12 10"><circle cx="6" cy="5" r="4.2" fill="#9a9a9a"/></svg>
<svg class="r" style="left:2694.0px;top:1012.0px;" width="12" height="10" viewBox="0 0 12 10"><circle cx="6" cy="5" r="4.2" fill="#9a9a9a"/></svg>
<div class="r" style="left:2050.0px;top:1054.7px;width:646.0px;height:59.1px;background:#212e4d;"></div>
<div class="t" style="left:2062.5px;top:1071.7px;font-size:28px;color:#dcdcdc;letter-spacing:0.4px;">Edges:</div>
<div class="r" style="left:2050.0px;top:1122.5px;width:623.0px;height:2.0px;background:#454c59;"></div>
<div class="r" style="left:2678.4px;top:1128.0px;width:11.2px;height:794.0px;background:#6b7079;border-radius:6px;"></div>
<div class="t" style="left:2067.5px;top:1159.2px;font-size:28px;color:#dcdcdc;letter-spacing:1.0px;">From Node:</div>
<div class="t" style="left:2249.0px;top:1159.2px;font-size:28px;color:#dcdcdc;letter-spacing:0.9px;">16</div>
<div class="t" style="left:2307.0px;top:1159.2px;font-size:28px;color:#dcdcdc;letter-spacing:0.6px;">From Slot:</div>
<div class="t" style="left:2464.5px;top:1159.2px;font-size:28px;color:#dcdcdc;letter-spacing:0.9px;">0</div>
<div class="t" style="left:2067.0px;top:1226.7px;font-size:28px;color:#dcdcdc;letter-spacing:0.95px;">To Node:</div>
<div class="t" style="left:2249.0px;top:1226.7px;font-size:28px;color:#dcdcdc;letter-spacing:0.9px;">17</div>
<div class="t" style="left:2306.5px;top:1226.7px;font-size:28px;color:#dcdcdc;letter-spacing:0.6px;">To Slot:</div>
<div class="t" style="left:2464.5px;top:1226.7px;font-size:28px;color:#dcdcdc;letter-spacing:0.9px;">0</div>
<div class="r" style="left:2063.8px;top:1301.8px;width:28.2px;height:28.1px;background:#555b66;border-radius:4px;"></div>
<div class="t" style="left:2122.0px;top:1303.7px;font-size:28px;color:#dcdcdc;letter-spacing:0.8px;">Override colour:</div>
<div class="r" style="left:2351.0px;top:1286.0px;width:236.7px;height:60.5px;background:#2f3541;border-radius:5px;"></div>
<div class="r" style="left:2363.0px;top:1296.0px;width:213.2px;height:40.8px;background:#696969;"></div>
<div class="r" style="left:2060.2px;top:1355.0px;width:221.3px;height:60.4px;background:#252a33;border-radius:5px;"></div>
<svg class="r" style="left:2073.8px;top:1370.7px;" width="28" height="29" viewBox="0 0 29 29"><g fill="#e0e0e0"><rect x="0" y="3.5" width="29" height="3.2"/><rect x="9" y="0" width="11" height="3"/><path d="M2 8.5H27V25A4 4 0 0 1 23 29H6A4 4 0 0 1 2 25Z"/></g><g fill="#2a2e36"><rect x="7.3" y="12" width="3.2" height="13"/><rect x="13" y="12" width="3.2" height="13"/><rect x="18.7" y="12" width="3.2" height="13"/></g></svg>
<div class="t" style="left:2112.0px;top:1372.4px;font-size:28px;color:#dcdcdc;letter-spacing:0.35px;">Delete Edge</div>
<div class="r" style="left:2050.0px;top:1434.7px;width:623.0px;height:2.0px;background:#454c59;"></div>
<div class="t" style="left:2067.5px;top:1470.9px;font-size:28px;color:#dcdcdc;letter-spacing:1.0px;">From Node:</div>
<div class="t" style="left:2249.0px;top:1470.9px;font-size:28px;color:#dcdcdc;letter-spacing:0.9px;">16</div>
<div class="t" style="left:2307.0px;top:1470.9px;font-size:28px;color:#dcdcdc;letter-spacing:0.6px;">From Slot:</div>
<div class="t" style="left:2464.5px;top:1470.9px;font-size:28px;color:#dcdcdc;letter-spacing:0.9px;">1</div>
<div class="t" style="left:2067.0px;top:1538.4px;font-size:28px;color:#dcdcdc;letter-spacing:0.95px;">To Node:</div>
<div class="t" style="left:2249.0px;top:1538.4px;font-size:28px;color:#dcdcdc;letter-spacing:0.9px;">19</div>
<div class="t" style="left:2306.5px;top:1538.4px;font-size:28px;color:#dcdcdc;letter-spacing:0.6px;">To Slot:</div>
<div class="t" style="left:2464.5px;top:1538.4px;font-size:28px;color:#dcdcdc;letter-spacing:0.9px;">0</div>
<div class="r" style="left:2063.8px;top:1613.5px;width:28.2px;height:28.1px;background:#555b66;border-radius:4px;"></div>
<div class="t" style="left:2122.0px;top:1615.4px;font-size:28px;color:#dcdcdc;letter-spacing:0.8px;">Override colour:</div>
<div class="r" style="left:2351.0px;top:1597.7px;width:236.7px;height:60.5px;background:#2f3541;border-radius:5px;"></div>
<div class="r" style="left:2363.0px;top:1607.7px;width:213.2px;height:40.8px;background:#696969;"></div>
<div class="r" style="left:2060.2px;top:1666.7px;width:221.3px;height:60.4px;background:#252a33;border-radius:5px;"></div>
<svg class="r" style="left:2073.8px;top:1682.4px;" width="28" height="29" viewBox="0 0 29 29"><g fill="#e0e0e0"><rect x="0" y="3.5" width="29" height="3.2"/><rect x="9" y="0" width="11" height="3"/><path d="M2 8.5H27V25A4 4 0 0 1 23 29H6A4 4 0 0 1 2 25Z"/></g><g fill="#2a2e36"><rect x="7.3" y="12" width="3.2" height="13"/><rect x="13" y="12" width="3.2" height="13"/><rect x="18.7" y="12" width="3.2" height="13"/></g></svg>
<div class="t" style="left:2112.0px;top:1684.1px;font-size:28px;color:#dcdcdc;letter-spacing:0.35px;">Delete Edge</div>
<div class="r" style="left:2050.0px;top:1746.4px;width:623.0px;height:2.0px;background:#454c59;"></div>
<div class="t" style="left:2067.5px;top:1783.4px;font-size:28px;color:#dcdcdc;letter-spacing:1.0px;">From Node:</div>
<div class="t" style="left:2249.0px;top:1783.4px;font-size:28px;color:#dcdcdc;letter-spacing:0.9px;">6</div>
<div class="t" style="left:2307.0px;top:1783.4px;font-size:28px;color:#dcdcdc;letter-spacing:0.6px;">From Slot:</div>
<div class="t" style="left:2464.5px;top:1783.4px;font-size:28px;color:#dcdcdc;letter-spacing:0.9px;">1</div>
<div class="t" style="left:2067.0px;top:1850.9px;font-size:28px;color:#dcdcdc;letter-spacing:0.95px;">To Node:</div>
<div class="t" style="left:2249.0px;top:1850.9px;font-size:28px;color:#dcdcdc;letter-spacing:0.9px;">16</div>
<div class="t" style="left:2306.5px;top:1850.9px;font-size:28px;color:#dcdcdc;letter-spacing:0.6px;">To Slot:</div>
<div class="t" style="left:2464.5px;top:1850.9px;font-size:28px;color:#dcdcdc;letter-spacing:0.9px;">0</div>
<div class="r" style="left:2063.8px;top:1926.0px;width:28.2px;height:28.1px;background:#555b66;border-radius:4px;"></div>
<div class="t" style="left:2122.0px;top:1927.9px;font-size:28px;color:#dcdcdc;letter-spacing:0.8px;">Override colour:</div>
<div class="r" style="left:2351.0px;top:1910.2px;width:236.7px;height:60.5px;background:#2f3541;border-radius:5px;"></div>
<div class="r" style="left:2363.0px;top:1920.2px;width:213.2px;height:40.8px;background:#696969;"></div>
<div class="r" style="left:2060.2px;top:1979.2px;width:221.3px;height:60.4px;background:#252a33;border-radius:5px;"></div>
<svg class="r" style="left:2073.8px;top:1994.9px;" width="28" height="29" viewBox="0 0 29 29"><g fill="#e0e0e0"><rect x="0" y="3.5" width="29" height="3.2"/><rect x="9" y="0" width="11" height="3"/><path d="M2 8.5H27V25A4 4 0 0 1 23 29H6A4 4 0 0 1 2 25Z"/></g><g fill="#2a2e36"><rect x="7.3" y="12" width="3.2" height="13"/><rect x="13" y="12" width="3.2" height="13"/><rect x="18.7" y="12" width="3.2" height="13"/></g></svg>
<div class="t" style="left:2112.0px;top:1996.6px;font-size:28px;color:#dcdcdc;letter-spacing:0.35px;">Delete Edge</div>
<div class="r" style="left:2050.0px;top:2058.9px;width:623.0px;height:2.0px;background:#454c59;"></div>
</body></html>
